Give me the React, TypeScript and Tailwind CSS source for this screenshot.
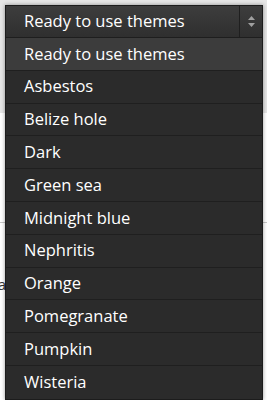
import React from 'react';

const themes = [
    'Ready to use themes',
    'Asbestos',
    'Belize hole',
    'Dark',
    'Green sea',
    'Midnight blue',
    'Nephritis',
    'Orange',
    'Pomegranate',
    'Pumpkin',
    'Wisteria',
];

const App: React.FC = () => {
    return (
        <div className="relative w-[267px] h-[400px] overflow-hidden bg-white font-['Open_Sans',sans-serif]">
            {/* page behind the menu */}
            <div className="h-[113px] bg-[#e6e6e6]" />
            <div className="mt-[109px] h-px w-full bg-[#c8c8c8]" />
            <p className="mt-[50px] -ml-[6px] text-[15px] text-[#333]">la</p>

            {/* theme select, open */}
            <div className="absolute left-[5px] top-[5px] w-[258px] border border-[#1c1c1c] bg-[#2b2b2b] text-white shadow-[0_0_4px_rgba(0,0,0,0.4)]">
                <div className="flex h-[32px] items-center bg-gradient-to-b from-[#3d3d3d] to-[#2f2f2f] border-b border-[#1e1e1e]">
                    <span className="flex-1 pl-[18px] text-[16.5px] font-medium leading-none">Ready to use themes</span>
                    <div className="flex h-full w-[23px] items-center justify-center border-l border-[#1f1f1f]">
                        <svg width="7" height="11" viewBox="0 0 7 11" fill="#a0a0a0">
                            <path d="M3.5 0L7 4H0z" />
                            <path d="M3.5 11L0 7h7z" />
                        </svg>
                    </div>
                </div>
                <ul>
                    {themes.map((t, i) => (
                        <li
                            key={t}
                            className={`flex h-[32.8px] items-center pl-[18px] text-[16.5px] font-medium border-b border-[#1f1f1f] last:border-b-0 ${i === 0 ? 'bg-[#3c3c3c]' : 'bg-[#2b2b2b]'}`}
                        >
                            {t}
                        </li>
                    ))}
                </ul>
            </div>
        </div>
    );
};

export default App;
